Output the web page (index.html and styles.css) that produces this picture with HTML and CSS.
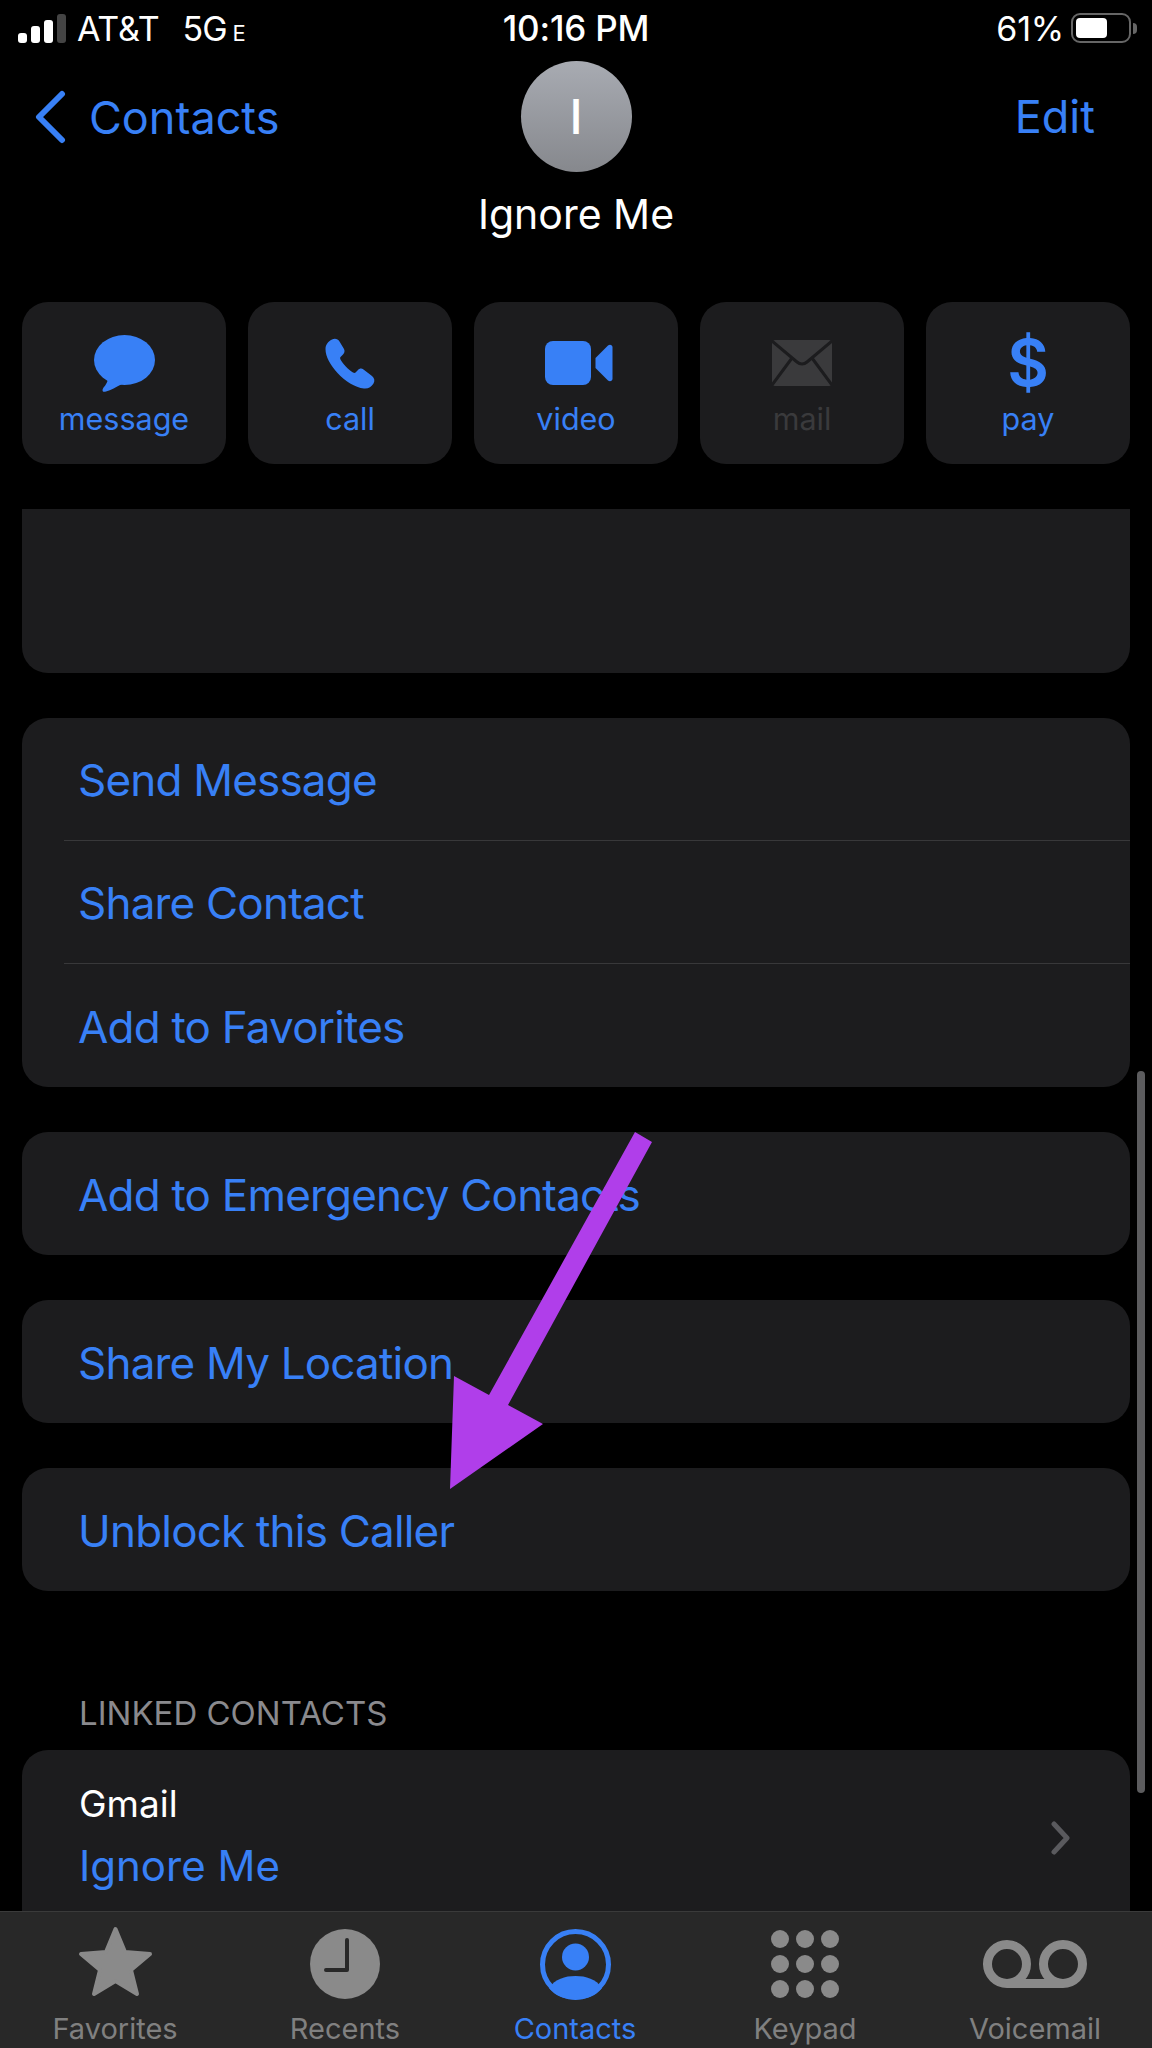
FILE: index.html
```html
<!DOCTYPE html>
<html lang="en">
<head>
    <meta charset="UTF-8">
    <meta name="viewport" content="width=device-width, initial-scale=1.0">
    <title>Ignore Me</title>
    <link rel="stylesheet" href="styles.css">
</head>
<body>
    <div class="phone">
        <div class="status">
            <div class="status-left">
                <div class="signal">
                    <span class="bar bar1"></span>
                    <span class="bar bar2"></span>
                    <span class="bar bar3"></span>
                    <span class="bar bar4"></span>
                </div>
                <span class="carrier">AT&amp;T</span>
                <span class="net">5G<small>E</small></span>
            </div>
            <div class="status-time">10:16 PM</div>
            <div class="status-right">
                <span>61%</span>
                <div class="battery"><div class="battery-fill"></div></div>
                <div class="battery-tip"></div>
            </div>
        </div>

        <div class="nav">
            <div class="nav-back">
                <svg width="32" height="54" viewBox="0 0 32 54"><path d="M28 4 L5 27 L28 50" fill="none" stroke="#3880f6" stroke-width="6" stroke-linecap="round" stroke-linejoin="round"/></svg>
                <span>Contacts</span>
            </div>
            <div class="nav-center">
                <div class="avatar">I</div>
                <div class="name">Ignore Me</div>
            </div>
            <div class="nav-edit">Edit</div>
        </div>

        <div class="actions">
            <div class="action">
                <div class="action-icon">
                    <svg width="61" height="57" viewBox="0 0 61 57"><ellipse cx="30.5" cy="25" rx="30.5" ry="25" fill="#3880f6"/><path d="M14 44 C13 50 9 52 8.5 55 C8.5 57 10 57 12 56.5 C17 55.5 22 52 28 49 Z" fill="#3880f6"/></svg>
                </div>
                <div class="action-label">message</div>
            </div>
            <div class="action">
                <div class="action-icon">
                    <svg width="50" height="51" viewBox="0 0 50 51"><path d="M7 1.5 C10 0 13 1 14.5 3.5 L19 11 C20 13 19.5 15 18 16.5 L15.5 19 C15 19.5 15 20.5 15.5 21.5 C18 26 23 31.5 28 34.5 C29 35 30 35 30.5 34.5 L33 32 C34.5 30.5 36.5 30 38.5 31.5 L47 38 C49.5 40 50 43 48.5 45.5 C46.5 49 43 51 39 50.5 C30 49.5 20 43 12.5 35 C5.5 27 0.5 19 0.5 11 C0.5 7 3 3.5 7 1.5 Z" fill="#3880f6"/></svg>
                </div>
                <div class="action-label">call</div>
            </div>
            <div class="action">
                <div class="action-icon">
                    <svg class="video-icon" width="68" height="44" viewBox="0 0 68 44"><rect width="46" height="44" rx="8" fill="#3880f6"/><path d="M50.5 17 L63 4.5 C65 3 67.5 4 67.5 6.5 V37.5 C67.5 40 65 41 63 39.5 L50.5 27 Z" fill="#3880f6"/></svg>
                </div>
                <div class="action-label">video</div>
            </div>
            <div class="action action-off">
                <div class="action-icon">
                    <svg width="60" height="46" viewBox="0 0 60 46"><rect width="60" height="46" rx="3" fill="#3a3a3c"/><path d="M0 1 L25 22 C28 24.5 32 24.5 35 22 L60 1 M0 45 L20 18 M60 45 L40 18" fill="none" stroke="#1c1c1e" stroke-width="3"/></svg>
                </div>
                <div class="action-label">mail</div>
            </div>
            <div class="action">
                <div class="action-icon"><span class="dollar">$</span></div>
                <div class="action-label">pay</div>
            </div>
        </div>

        <div class="list">
            <div class="card card-blank"></div>

            <div class="card">
                <div class="row"><span>Send Message</span></div>
                <div class="row"><span>Share Contact</span></div>
                <div class="row"><span>Add to Favorites</span></div>
            </div>

            <div class="card">
                <div class="row"><span>Add to Emergency Contacts</span></div>
            </div>

            <div class="card">
                <div class="row"><span>Share My Location</span></div>
            </div>

            <div class="card">
                <div class="row"><span>Unblock this Caller</span></div>
            </div>

            <div class="section-title">LINKED CONTACTS</div>

            <div class="card card-linked">
                <div class="linked-text">
                    <div class="linked-source">Gmail</div>
                    <div class="linked-name">Ignore Me</div>
                </div>
                <svg class="chevron" width="20" height="34" viewBox="0 0 20 34"><path d="M3 3 L16 17 L3 31" fill="none" stroke="#5a5a5e" stroke-width="5" stroke-linecap="round" stroke-linejoin="round"/></svg>
            </div>
        </div>

        <div class="tabbar">
            <div class="tab">
                <div class="tab-icon">
                    <svg class="star" width="75" height="71" viewBox="0 0 75 71"><polygon points="37.5,3 47,26 72,28 53,44 59,68 37.5,55 16,68 22,44 3,28 28,26" fill="#8a8a8a" stroke="#8a8a8a" stroke-width="4" stroke-linejoin="round"/></svg>
                </div>
                <div class="tab-label">Favorites</div>
            </div>
            <div class="tab">
                <div class="tab-icon">
                    <svg width="70" height="70" viewBox="0 0 70 70"><circle cx="35" cy="35" r="35" fill="#8a8a8a"/><path d="M37 11 V41 H16" fill="none" stroke="#282828" stroke-width="4" stroke-linecap="round" stroke-linejoin="round"/></svg>
                </div>
                <div class="tab-label">Recents</div>
            </div>
            <div class="tab tab-active">
                <div class="tab-icon">
                    <svg width="71" height="71" viewBox="0 0 71 71"><circle cx="35.5" cy="35.5" r="33" fill="none" stroke="#3880f6" stroke-width="5"/><circle cx="35.5" cy="28" r="13.5" fill="#3880f6"/><path d="M9 59 C15 50 25 47 35.5 47 C46 47 56 50 62 59 C56 67 46 70.5 35.5 70.5 C25 70.5 15 67 9 59 Z" fill="#3880f6"/></svg>
                </div>
                <div class="tab-label">Contacts</div>
            </div>
            <div class="tab">
                <div class="tab-icon">
                    <div class="keypad">
                        <span></span><span></span><span></span>
                        <span></span><span></span><span></span>
                        <span></span><span></span><span></span>
                    </div>
                </div>
                <div class="tab-label">Keypad</div>
            </div>
            <div class="tab">
                <div class="tab-icon">
                    <svg width="104" height="48" viewBox="0 0 104 48"><path d="M24 43.5 H80 M24 43.5 A19.5 19.5 0 1 1 24 4.5 A19.5 19.5 0 0 1 24 43.5 Z M80 43.5 A19.5 19.5 0 1 1 80 4.5 A19.5 19.5 0 0 1 80 43.5 Z" fill="none" stroke="#8a8a8a" stroke-width="9"/></svg>
                </div>
                <div class="tab-label">Voicemail</div>
            </div>
        </div>

        <div class="scrollbar"></div>

        <svg class="arrow" width="1152" height="2048" viewBox="0 0 1152 2048"><polygon points="635,1132 652,1142 508,1405 543,1424 450,1489 454,1376 489,1395" fill="#b03eea"/></svg>
    </div>
</body>
</html>
```

FILE: styles.css
```css
body {
    --blue: #3880f6;
    --card: #1c1c1e;
    margin: 0;
    padding: 0;
    background-color: #000;
    font-family: Inter, "Liberation Sans", sans-serif;
    color: #fff;
}
.phone {
    position: relative;
    display: flex;
    flex-direction: column;
    width: 1152px;
    height: 2048px;
    overflow: hidden;
    background-color: #000;
}

/* status bar */
.status {
    display: grid;
    grid-template-columns: 1fr auto 1fr;
    align-items: center;
    height: 56px;
    padding: 0 15px;
    font-size: 34px;
    letter-spacing: -0.2px;
    flex: none;
}
.status-left {
    display: flex;
    align-items: center;
    margin-left: 3px;
}
.signal {
    display: flex;
    align-items: flex-end;
    gap: 4px;
    height: 30px;
    margin-right: 11px;
}
.bar {
    width: 9px;
    border-radius: 3px;
    background: #fff;
}
.bar1 { height: 10px; }
.bar2 { height: 17px; }
.bar3 { height: 23px; }
.bar4 { height: 29px; background: #444; }
.net {
    margin-left: 23px;
    letter-spacing: -1px;
}
.net small {
    margin-left: 6px;
    font-size: 22px;
}
.status-time {
    font-size: 35px;
    font-weight: 500;
}
.status-right {
    display: flex;
    align-items: center;
    justify-content: flex-end;
}
.battery {
    box-sizing: border-box;
    width: 60px;
    height: 30px;
    margin-left: 7px;
    padding: 3px;
    border: 2px solid #666;
    border-radius: 9px;
}
.battery-fill {
    width: 31px;
    height: 20px;
    border-radius: 4px;
    background: #fff;
}
.battery-tip {
    width: 4px;
    height: 11px;
    margin-left: 2px;
    border-radius: 0 4px 4px 0;
    background: #666;
}

/* nav */
.nav {
    display: grid;
    grid-template-columns: 1fr auto 1fr;
    align-items: start;
    box-sizing: border-box;
    height: 246px;
    padding: 5px 57px 0;
    flex: none;
    font-size: 45px;
    color: var(--blue);
}
.nav-back {
    display: flex;
    align-items: center;
    gap: 23px;
    height: 54px;
    margin: 29px 0 0 -23px;
}
.nav-center {
    display: flex;
    flex-direction: column;
    align-items: center;
}
.avatar {
    display: flex;
    align-items: center;
    justify-content: center;
    width: 111px;
    height: 111px;
    border-radius: 50%;
    background: linear-gradient(#a8abb2, #86888d);
    color: #fff;
    font-size: 48px;
    font-weight: 500;
}
.name {
    margin-top: 17px;
    color: #fff;
    font-size: 41px;
}
.nav-edit {
    height: 54px;
    margin-top: 29px;
    line-height: 54px;
    text-align: right;
}

/* action buttons */
.actions {
    display: flex;
    gap: 22px;
    padding: 0 22px;
    flex: none;
}
.action {
    flex: 1;
    height: 162px;
    padding-top: 28px;
    box-sizing: border-box;
    border-radius: 26px;
    background: var(--card);
    color: var(--blue);
    text-align: center;
}
.action-off {
    color: #3a3a3c;
}
.action-icon {
    display: flex;
    align-items: center;
    justify-content: center;
    height: 66px;
}
.video-icon {
    margin-left: 5px;
}
.action-label {
    margin-top: 5px;
    font-size: 30.5px;
    line-height: 36px;
}
.dollar {
    font-size: 64px;
    font-weight: 600;
    line-height: 66px;
}

/* list */
.list {
    display: flex;
    flex-direction: column;
    gap: 45px;
    flex: 1;
    min-height: 0;
    padding: 45px 22px 0;
    overflow: hidden;
    font-size: 44px;
    letter-spacing: -0.8px;
}
.card {
    flex: none;
    border-radius: 26px;
    background: var(--card);
    color: var(--blue);
}
.card-blank {
    height: 164px;
    border-radius: 0 0 26px 26px;
}
.row {
    box-sizing: border-box;
    display: flex;
    align-items: center;
    height: 123px;
    margin-left: 42px;
    padding: 2px 0 0 14px;
    border-bottom: 1px solid #38383a;
}
.row:last-child {
    border-bottom: 0;
}
.section-title {
    margin: 57px 0 -28px 57px;
    color: #8a8a8e;
    font-size: 33px;
    letter-spacing: 0;
    line-height: 40px;
    flex: none;
}
.card-linked {
    display: flex;
    align-items: center;
    justify-content: space-between;
    height: 176px;
    padding: 0 59px 30px 57px;
    letter-spacing: 0;
}
.linked-text {
    padding-bottom: 6px;
}
.linked-source {
    color: #fff;
    font-size: 37px;
    line-height: 62px;
}
.linked-name {
    font-size: 42px;
    line-height: 62px;
}

/* tab bar */
.tabbar {
    display: flex;
    flex: none;
    height: 136px;
    padding-right: 2px;
    border-top: 1px solid #3a3a3a;
    background: #282828;
    color: #808080;
}
.tab {
    flex: 1;
    padding-top: 12px;
    text-align: center;
}
.tab-active {
    color: var(--blue);
}
.tab-icon {
    display: flex;
    align-items: center;
    justify-content: center;
    height: 80px;
}
.star {
    margin-top: -6px;
}
.tab-label {
    font-size: 29px;
    line-height: 36px;
    margin-top: 7px;
}
.keypad {
    display: grid;
    grid-template-columns: repeat(3, 18px);
    grid-auto-rows: 18px;
    column-gap: 7px;
    row-gap: 7px;
}
.keypad span {
    border-radius: 50%;
    background: #8a8a8a;
}

/* overlays */
.scrollbar {
    position: absolute;
    top: 1071px;
    left: 1137px;
    width: 8px;
    height: 722px;
    border-radius: 4px;
    background: #5c5c5e;
}
.arrow {
    position: absolute;
    top: 0;
    left: 0;
    pointer-events: none;
}
```
